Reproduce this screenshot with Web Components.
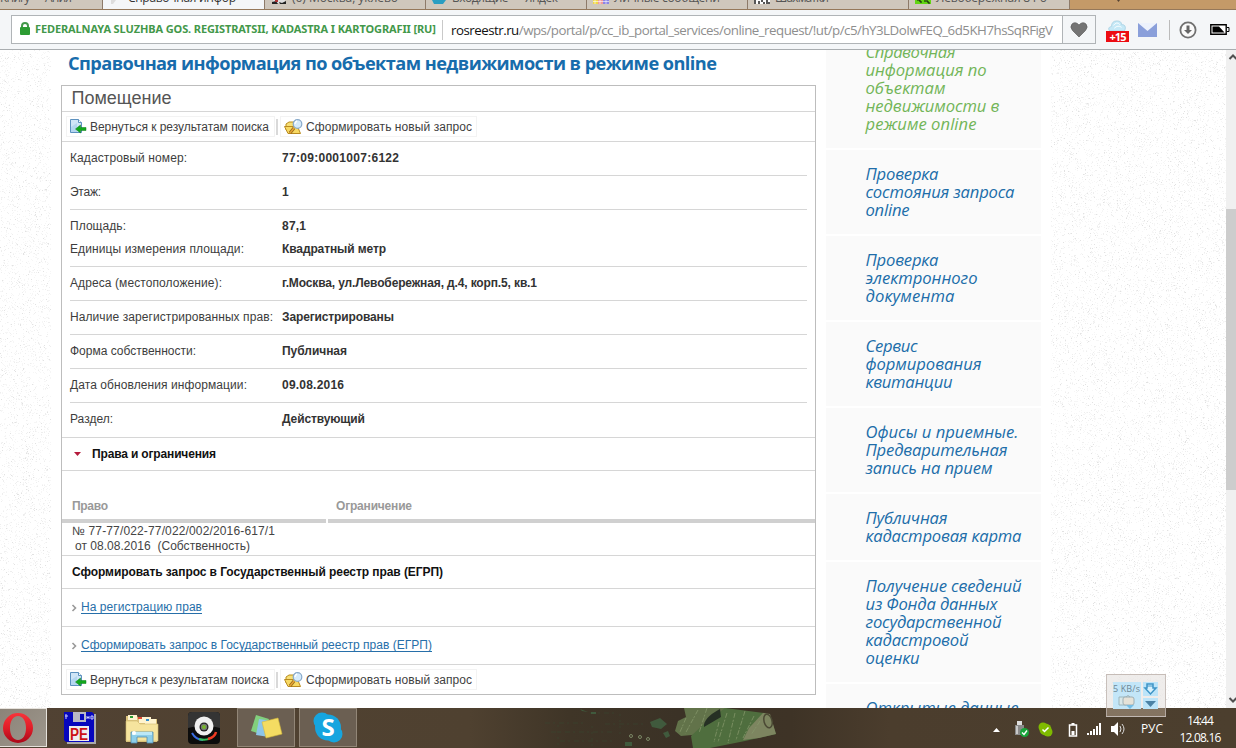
<!DOCTYPE html>
<html lang="ru"><head><meta charset="utf-8"><title>Росреестр</title>
<style>html,body{margin:0;width:1236px;height:748px;overflow:hidden;background:#fff}body{font:12px/16px "Liberation Sans",Arial,sans-serif}</style></head>
<body><app-screen></app-screen>
<script>
const F=(t,w,c='')=>`<fit-text w="${w}" class="${c}">${t}</fit-text>`;
function define(name,html,setup){
  customElements.define(name,class extends HTMLElement{
    connectedCallback(){
      if(this.shadowRoot)return;
      const t=document.createElement('template');
      t.innerHTML='<style>*{box-sizing:border-box}:host{display:block;box-sizing:border-box}</style>'+(typeof html==='function'?html(this):html);
      this.attachShadow({mode:'open'}).append(t.content.cloneNode(true));
      if(setup)setup(this);
    }
  });
}

define('app-screen',`<style>:host{display:flex;flex-direction:column;width:1236px;height:748px;position:relative;overflow:hidden}
site-page{flex:1;min-height:0}speed-gadget{position:absolute;left:1106px;top:674px}</style>
<tab-strip></tab-strip><address-bar></address-bar><site-page></site-page><task-bar></task-bar><speed-gadget></speed-gadget>`);

define('tab-strip',`<style>:host{display:flex;height:10px;background:#c49a68;overflow:hidden;border-bottom:1px solid #95785a;font:12px/14px "Open Sans","Noto Sans",sans-serif;color:#555}
:host{height:10px}
.t{flex:none;width:161px;height:10px;background:#cfc7bc;border-right:1px solid #8d7a69;display:flex;white-space:nowrap;overflow:hidden}
.t fit-text{margin-top:-9px}.t svg{flex:none;margin:0 5px 0 6px}
.first{width:103px}.on{background:#f4f6f8;color:#333;margin-bottom:-1px;width:162px}.plus{margin-left:46px;width:5px}</style>
<div class="t first">${F('Книгу — Ания',72)}</div>
<div class="t on"><svg width="14" height="4"><path d="M2 0h5l-3 4H2z" fill="#ddd"/></svg>${F('Справочная инфор',108)}</div>
<div class="t"><svg width="16" height="4"><path d="M2 0h12v3H2z" fill="#ddd"/><path d="M1 2l4-1 2 3H1zM8 2l3 1 4-2v3H9z" fill="#222"/><path d="M4 0h3v2H4z" fill="#a33"/></svg>${F('(6) Москва, уклево',106)}</div>
<div class="t"><svg width="15" height="4"><path d="M0 0h14l-3 4H2z" fill="#2a9ec2"/></svg>${F('Входящие — Яндек',106)}</div>
<div class="t"><svg width="16" height="4"><path d="M0 0h5v4H0z" fill="#f0d848"/><path d="M5 0h5v4H5z" fill="#f19b9b"/><path d="M10 0h6v4h-6z" fill="#8a84e6"/><path d="M0 1.5h16M2 0v4M7 0v4M13 0v4" stroke="#fff" stroke-width=".6"/></svg>${F('Личные сообщени',106)}</div>
<div class="t"><svg width="16" height="4"><path d="M0 0h16v4H0z" fill="#fff"/><path d="M1 0v4M5 1v3M8 0v2M10 2v2M13 0v4M15 2v2" stroke="#111" stroke-width="1.4"/></svg>${F('Шахматки',54)}</div>
<div class="t"><svg width="16" height="4"><path d="M0 0h16v4H0z" fill="#62d513"/><path d="M2 0h3v2h2M9 1h4v2h2" stroke="#111" fill="none"/></svg>${F('Левобережная 8 Ро',111)}</div>
<svg class="plus" width="5" height="3"><path d="M1 0h3L2.500 2z" fill="#543"/></svg>`);

define('address-bar',`<style>:host{display:flex;height:40px;background:#f4f6f8;border-bottom:1px solid #a9adb0;padding:5px 0 6px 11px;align-items:flex-start;font-family:"Open Sans","Noto Sans",sans-serif}
.box{width:1052px;height:29px;border:1px solid #b0b4b7;background:#fff;display:flex;align-items:center}
.lock{margin:0 4px 1px 7px;flex:none}.org{font:bold 11px/16px "Noto Sans","Open Sans",sans-serif;color:#43984a;width:408px;margin-top:-2px}.sep{width:1px;height:20px;background:#c9c9c9;margin-right:8px;flex:none;margin-left:-1px}
.url{font-size:13.3px;line-height:20px;color:#8e8e8e;white-space:nowrap;overflow:hidden}.url b{font-weight:400;color:#111}
.heart{width:34px;height:29px;border:1px solid #b0b4b7;margin-left:-1px;display:grid;place-items:center}
.tools{display:flex;align-items:center;height:29px}
.cloud{width:23px;height:27px;margin:8px 0 0 10px}.badge{font:bold 11px/11px "Open Sans";background:#ec0c12;color:#fff;height:11px;width:23px;text-align:center}
.cloud svg{display:block}</style>
<div class="box"><svg class="lock" width="12" height="14"><path d="M3 6V4q0-3 3-3t3 3v2" fill="none" stroke="#43984a" stroke-width="2"/><rect x="1" y="5" width="10" height="8" rx="1" fill="#2d9c33"/></svg>
<div class="org">${F('FEDERALNAYA SLUZHBA GOS. REGISTRATSII, KADASTRA I KARTOGRAFII [RU]',401)}</div><i class="sep"></i><div class="url">${F('<b>rosreestr.ru</b>/wps/portal/p/cc_ib_portal_services/online_request/!ut/p/c5/hY3LDoIwFEQ_6d5KH7hsSqRFigV',602)}</div></div>
<div class="heart"><svg width="18" height="16" viewBox="0 0 18 16"><path d="M9 15L2.500 8.500Q-.5 5 2 2q3.500-3 7 1 3.500-4 7-1 2.500 3-.5 6.500z" fill="#747474" stroke="#5f5f5f" stroke-width=".7"/></svg></div>
<div class="tools"><div class="cloud"><svg width="22" height="11" viewBox="0 0 22 12"><path d="M3 12Q0 8 5 7q0-6 6-6 5 0 5 4 5 0 4 5l-1 2z" fill="#c5e8f6" stroke="#9bc8dc" stroke-width=".7"/><path d="M7 6q4-5 7-1M8 9q4-4 8-1" stroke="#fff" fill="none"/></svg><div class="badge">${F('+15',17)}</div></div>
<svg style="margin-left:9px" width="19" height="14"><path d="M0 0h19v14H0z" fill="#8a9fda"/><path d="M0 0h19l-9.500 8z" fill="#edf2fc"/></svg>
<svg style="margin-left:12px" width="1" height="20"><path d="M.5 0v20" stroke="#bbb"/></svg>
<svg style="margin-left:9px" width="18" height="18"><circle cx="9" cy="9" r="7.600" fill="#fafafa" stroke="#707070" stroke-width="1.800"/><path d="M7.500 4.500h3V9H13l-4 4-4-4h2.500z" fill="#666"/></svg>
<svg style="margin-left:13px" width="20" height="12"><path d="M.8.800h15.400v9.400H.8z" fill="#fff" stroke="#000" stroke-width="1.400"/><path d="M2.500 2.500H9l5.500 6h-12z"/><path d="M17 3.500h2v4h-2" fill="none" stroke="#000"/></svg></div>`);

define('paper-noise','<svg style="display:block" width="100%" height="658"></svg>',h=>{
  const w=+h.getAttribute('w');let s=w*7919;const r=()=>(s=(s*1664525+1013904223)>>>0)/4294967296;
  const svg=h.shadowRoot.querySelector('svg');
  for(const [col,n] of [['#f6f6f6',.1],['#eeeeee',.04],['#e2e2e2',.01]]){
    let d='';for(let i=0;i<w*658*n;i++)d+=`M${r()*w|0} ${r()*658|0}h1v1h-1z`;
    const p=document.createElementNS('http://www.w3.org/2000/svg','path');p.setAttribute('d',d);p.setAttribute('fill',col);svg.append(p);
  }
});

define('site-page',`<style>:host{display:grid;grid-template-columns:51px 10px 755px 10px 215px 10px 175px 10px;overflow:hidden;height:658px;background:#fff}
h1{margin:0 0 0 7px;height:35px;font:bold 18.2px/27px "Open Sans","Noto Sans",sans-serif;color:#176cac;white-space:nowrap}.c{min-height:0}</style>
<paper-noise w="51"></paper-noise><i></i><div class="c"><h1>${F('Справочная информация по объектам недвижимости в режиме online',649)}</h1><object-card></object-card></div><i></i><side-menu></side-menu><i></i><paper-noise w="175"></paper-noise><scroll-bar></scroll-bar>`);

define('scroll-bar',`<style>:host{background:#f0f0f0;height:658px;display:flex;flex-direction:column}.th{height:281px;background:#cdcdcd;margin-top:149px}svg{display:block}.e{margin-top:auto}</style>
<svg width="10" height="10"><path d="M3.500 9L7 5.500 10.500 9" fill="none" stroke="#505050" stroke-width="2"/></svg><div class="th"></div><svg class="e" width="10" height="12"><path d="M3.500 2L7 5.500 10.500 2" fill="none" stroke="#505050" stroke-width="2"/></svg>`);

const menu=[[['Справочная',90],['информация по',121],['объектам',80],['недвижимости в',134],['режиме online',111]],
[['Проверка',73],['состояния запроса',149],['online',44]],[['Проверка',73],['электронного',112],['документа',89]],
[['Сервис',52],['формирования',116],['квитанции',87]],[['Офисы и приемные.',153],['Предварительная',142],['запись на прием',127]],
[['Публичная',82],['кадастровая карта',156]],[['Получение сведений',156],['из Фонда данных',132],['государственной',136],['кадастровой',103],['оценки',54]],[['Открытые данные',153]]];
define('side-menu',`<style>:host{display:flex;flex-direction:column;gap:2px;margin-top:-22px;height:720px}
a{display:block;flex:none;background:#fafafa;padding:15px 0 15px 39.5px;font:italic 16.6px/18px "Open Sans","Noto Sans",sans-serif;color:#206da9;white-space:nowrap}
a div{height:18px}a.on{color:#72b558}</style>${menu.map((m,i)=>`<a class="${i?'':'on'}">${m.map(l=>`<div>${F(...l)}</div>`).join('')}</a>`).join('')}`);

define('action-bar',`<style>:host{display:flex;height:29px;align-items:center;padding-left:4px;color:#3f3f3f}.b{height:21px;display:flex;align-items:center;border:1px solid #f3f3f3;flex:none}
.b svg{flex:none}.s{width:2px;height:16px;background:#d9d9d9;margin:0 2px 0 1px}</style>
<div class="b" style="width:209px;padding-left:3px"><svg width="17" height="17" style="margin-right:3px"><path d="M.5 1.500h8l3 3v10H.5z" fill="#cfe5f7" stroke="#5c91bf"/><path d="M8.500 1.500v3h3" fill="#fff" stroke="#5c91bf"/><path d="M1 9l6-4v9H1z" fill="#b4d6f0"/><path d="M5.500 11l5-4v2.500h5.500v3h-5.500V15z" fill="#12a81d" stroke="#0b7d18" stroke-width=".5"/></svg>${F('Вернуться к результатам поиска',179)}</div><i class="s"></i>
<div class="b" style="width:197px;padding-left:3px"><svg width="20" height="16" style="margin-right:2px"><path d="M2 5l3-2h5l2 2v6H2z" fill="#f7df75" stroke="#ba8d1d"/><path d="M.5 7.500h13l3 7H4z" fill="#f7d963" stroke="#b98a20"/><path d="M10 9l-4 5" stroke="#94641b" stroke-width="3"/><path d="M10 9l-4 5" stroke="#e6a533" stroke-width="1.500"/><circle cx="13.500" cy="5" r="4.300" fill="#d6ebfb" stroke="#87a9ca" stroke-width="1.200"/><path d="M11 5q0-2 2-3" stroke="#fff" fill="none" stroke-width="1.400"/></svg>${F('Сформировать новый запрос',166)}</div>`);

define('data-row',h=>`<style>:host{display:flex;margin:0 8px;height:${h.getAttribute('h')||34}px;align-items:flex-start;padding-top:${h.getAttribute('pt')||8}px;color:#3d3d3d;${h.hasAttribute('noline')?'':'border-bottom:1px solid #d6d6d6'}}
.l{width:212px;flex:none}.v{font-weight:bold;color:#333}</style><div class="l">${F(h.getAttribute('label'),h.getAttribute('lw'))}</div><div class="v">${F(h.getAttribute('value'),h.getAttribute('vw'))}</div>`);

define('object-card',`<style>:host{width:755px;height:610px;border:1px solid #bdbdbd;display:flex;flex-direction:column;background:#fff}:host>*,div{flex:none}
.h{height:26px;border-bottom:1px solid #d6d6d6;font-size:18px;line-height:25px;padding-left:9.5px;color:#555}
.tb{height:30px;border-bottom:1px solid #d6d6d6}.rights{height:34px;border-top:1px solid #d6d6d6;border-bottom:1px solid #d6d6d6;display:flex;align-items:center;font-weight:bold;color:#111;padding-left:12px}
.rights svg{margin-right:11px}.th{height:52px;display:grid;grid-template-columns:264px 1fr;column-gap:2px;font-weight:bold;color:#999}.th div{border-bottom:4px solid #d0d0d0;padding:27px 0 0 10px}.th div+div{padding-left:8px}
.td{height:33px;border-bottom:1px solid #d6d6d6;padding:1px 0 0 10px;line-height:15px;color:#444;white-space:pre}.td div{height:15px}
.td div+div{padding-left:3px}.q{height:33px;border-bottom:1px solid #d6d6d6;padding:8px 10px;font-weight:bold;color:#111}
.a{height:38px;border-bottom:1px solid #d6d6d6;display:flex;align-items:center;padding-left:9px;color:#276fa9}.a fit-text{border-bottom:1px solid #276fa9;line-height:13px;height:13px;margin-bottom:1px}.a svg{margin-right:4px}</style>
<div class="h">${F('Помещение',100)}</div><div class="tb"><action-bar></action-bar></div>
<data-row label="Кадастровый номер:" lw="117" value="77:09:0001007:6122" vw="117"></data-row>
<data-row label="Этаж:" lw="31" value="1" vw="6"></data-row>
<data-row label="Площадь:" lw="56" value="87,1" vw="24" noline></data-row>
<data-row label="Единицы измерения площади:" lw="174" value="Квадратный метр" vw="104" h="23" pt="-3"></data-row>
<data-row label="Адреса (местоположение):" lw="152" value="г.Москва, ул.Левобережная, д.4, корп.5, кв.1" vw="255"></data-row>
<data-row label="Наличие зарегистрированных прав:" lw="203" value="Зарегистрированы" vw="112"></data-row>
<data-row label="Форма собственности:" lw="126" value="Публичная" vw="65"></data-row>
<data-row label="Дата обновления информации:" lw="177" value="09.08.2016" vw="62"></data-row>
<data-row label="Раздел:" lw="43" value="Действующий" vw="83" noline></data-row>
<div class="rights"><svg width="7" height="4"><path d="M0 0h7L3.500 4z" fill="#b51b3c"/></svg>${F('Права и ограничения',124)}</div>
<div class="th"><div>${F('Право',36)}</div><div>${F('Ограничение',76)}</div></div>
<div class="td"><div>${F('№ 77-77/022-77/022/002/2016-617/1',203)}</div><div>${F('от 08.08.2016  (Собственность)',175)}</div></div>
<div class="q">${F('Сформировать запрос в Государственный реестр прав (ЕГРП)',371)}</div>
<div class="a"><svg width="6" height="8"><path d="M1.500 1l3 3-3 3" fill="none" stroke="#999" stroke-width="1.600"/></svg>${F('На регистрацию прав',121)}</div>
<div class="a"><svg width="6" height="8"><path d="M1.500 1l3 3-3 3" fill="none" stroke="#999" stroke-width="1.600"/></svg>${F('Сформировать запрос в Государственный реестр прав (ЕГРП)',351)}</div>
<action-bar></action-bar>`);

define('task-bar',`<style>:host{display:flex;height:40px;flex:none;background:linear-gradient(90deg,#514233 0,#4f4130 38%,#3f3527 46%,#3b3226 55%,#3e3326 64%,#4b3d2d 72%,#4c3f2e);overflow:hidden;color:#fff;font-family:"Open Sans","Noto Sans",sans-serif}
.b{flex:none;height:40px;display:grid;place-items:center}.w{background:#6b5f52;border:1px solid #928677;height:39px}.cur{background:linear-gradient(135deg,#8b8378,#9e978d);border:1px solid #e6e2dc;border-left:0;height:39px}
.art{margin-left:173px;flex:none}.tray{display:flex;align-items:center;flex:1;padding:2px 0 0 192px}.tray svg{flex:none}.clock{font-size:12px;line-height:17px;text-align:center;width:44px;margin-left:15px;margin-top:-1px}.lang{font-size:12px;margin-left:14px;width:22px}</style>
<div class="b cur" style="width:47px;padding-right:11px"><svg width="32" height="32"><defs><linearGradient id="o" x2="0" y2="1"><stop stop-color="#f8343a"/><stop offset=".5" stop-color="#e01d28"/><stop offset="1" stop-color="#a90819"/></linearGradient></defs><path fill-rule="evenodd" fill="url(#o)" d="M16 1a15 15 0 1 0 0 30 15 15 0 1 0 0-30m0 3c5 0 8 5 8 12s-3 12-8 12-8-5-8-12 3-12 8-12"/></svg></div>
<div class="b" style="width:66px"><svg width="32" height="32"><path d="M2 2h30v30H3z" fill="#aaa"/><path d="M0 0h28l2 2v28H2l-2-2z" fill="#0707bd"/><path d="M9 0h13v10H9z" fill="#b9b9c5"/><path d="M16 2h4v6h-4z" fill="#0707bd"/><path d="M5 14h20v15H5z" fill="#eee"/><path d="M2 2v5M1 4h3M23 4v3M25 4v3M23 5.500h2M27 4v3h2V4z" stroke="#ccf" fill="none"/><text x="6" y="28" font-family="Liberation Sans" font-weight="bold" font-size="16" textLength="18" lengthAdjust="spacingAndGlyphs" fill="#cc1116">PE</text></svg></div>
<div class="b" style="width:58px"><svg width="34" height="32"><path d="M1 4h11l2 3h18v23H1z" fill="#dcc37c"/><path d="M3 3h9v5H3zM14 5h12v6H14zM20 7h11v6H20z" fill="#fff4cf"/><path d="M5 4h3v2H5z" fill="#2a9d35"/><path d="M13 5h4v2h-4z" fill="#dc4935"/><path d="M21 7h3v2h-3z" fill="#348dce"/><path d="M1 9h11l3 3h18v17H1z" fill="#f6e49e" stroke="#d2ba70" stroke-width=".6"/><path d="M6 31V20h22v11h-6v-6H12v6z" fill="#8dcee9" stroke="#508eb0" stroke-width=".8"/><path d="M7 20h20v3H7z" fill="#bce8f7"/><circle cx="9" cy="21" r="2" fill="#fff"/></svg></div>
<div class="b" style="width:66px"><svg width="32" height="32"><rect width="32" height="32" rx="4" fill="#0c0c0c"/><path d="M0 4q0-4 4-4h24q4 0 4 4v12Q16 11 0 16z" fill="#343434"/><path d="M4 21q4 7 11 7" stroke="#3a6de0" stroke-width="2" fill="none"/><path d="M11 27q7 2 11-1" stroke="#38c05c" stroke-width="2" fill="none"/><path d="M20 27q7-2 8-7" stroke="#f03b22" stroke-width="2.500" fill="none"/><circle cx="16" cy="14" r="9.500" fill="#f0f0f0"/><circle cx="16" cy="15" r="4.500" fill="#222"/><circle cx="16" cy="15" r="3.200" fill="#777"/><circle cx="16" cy="15" r="2" fill="#75b52b"/></svg></div>
<div class="b w" style="width:58px"><svg width="34" height="28"><path d="M7 1l13 4-5 16-13-4z" fill="#82cf7d"/><path d="M10 5l13 2-3 16-13-2z" fill="#8cc5e9"/><path d="M13 8l16-4 4 16-16 4z" fill="#f4dc62" stroke="#d3b93b" stroke-width=".6"/></svg></div>
<div class="b w" style="width:58px;margin-left:4px"><svg width="30" height="31"><g fill="#16a5df"><circle cx="9" cy="9" r="8.500"/><circle cx="21" cy="22" r="8.500"/><circle cx="15" cy="15.500" r="13"/></g><text x="15" y="24" text-anchor="middle" font-family="Open Sans" font-size="24" font-weight="bold" fill="#fff">S</text></svg></div>
<svg class="art" width="270" height="40" viewBox="530 0 270 40"><g fill="none" stroke="#394b32" opacity=".5"><path d="M545 15h42M551 24h63M560 33h52M605 16h40M590 5h24" stroke-dasharray="5 3 2 4"/><path d="M558 17v20M592 18v22M620 6v24" stroke-dasharray="2 4"/></g><g fill="#405a3d"><path d="M580 1l8 3-6-1M591 4h5v2h-5M650 14l10-4 7 6-6 5-9-2M663 25l5-2 2 5-4 2M625 34h7v4h-7z"/></g><g fill="none" stroke="#7b8866"><circle cx="631" cy="28" r="1.500"/><circle cx="640" cy="29" r="1.500"/><circle cx="648" cy="31" r="1.500"/></g>
<path d="M684 0h43l-16 14-8 12-22 2-6-5 3-10 8-4z" fill="#62734a"/><path d="M725 0l40 5 7 9 4 12-31 7-35 7h-17l-2-12 13-12z" fill="#4f6e3e"/><path d="M749 20l14-15 7 1 6 20-17 4-16 2z" fill="#7d8560"/><path d="M720 1q-17 9-16 18l17-10z" fill="#263024"/><path d="M686 10l-6 14M698 2l-13 24M707 0l-8 25M719 14l-5 20M727 5l-9 29M735 5l-7 30M745 3l-9 29M754 8l-11 22M760 13l-9 14" stroke="#87996c" stroke-dasharray="5 2 2 1" opacity=".75"/><ellipse cx="768" cy="13" rx="4" ry="7" transform="rotate(-15 768 13)" fill="none" stroke="#4b4934" stroke-width="1.500"/></svg>
<div class="tray"><svg width="9" height="5"><path d="M1 5l3.500-4L8 5z" fill="#fff"/></svg>
<svg style="margin-left:12px" width="17" height="18"><path d="M4 1h5v4H4z" fill="#ddd"/><path d="M2 5h9v10H2z" fill="#8a8a8a"/><path d="M3 6h2v8H3z" fill="#c9c9c9"/><circle cx="11.500" cy="12.500" r="4.500" fill="#18a43a"/><path d="M9 12.500l2 2 3-4" fill="none" stroke="#fff" stroke-width="1.400"/></svg>
<svg style="margin-left:8px" width="15" height="15"><g fill="#7fba00"><circle cx="5" cy="5" r="4.500"/><circle cx="10" cy="10" r="4.500"/><circle cx="7.500" cy="7.500" r="6"/></g><path d="M4.500 7.500l2 2 4-4" fill="none" stroke="#fff" stroke-width="1.500"/></svg>
<svg style="margin-left:15px" width="10" height="15"><path d="M1.500 3h7v11h-7z" fill="none" stroke="#fff" stroke-width="1.500"/><path d="M3.500 1h3v2h-3zM3.500 9h3v4h-3z" fill="#fff"/></svg>
<svg style="margin-left:9px" width="15" height="14"><path d="M0 11h2v2H0zM3 9h2v4H3zM6 7h2v6H6zM9 4h2v9H9zM12 1h2v12h-2z" fill="#fff"/></svg>
<svg style="margin-left:9px" width="16" height="14"><path d="M0 4h3l4-4v14l-4-4H0z" fill="#fff"/><path d="M9 4q2 3 0 6M11 2q4 5 0 10" fill="none" stroke="#ddd"/></svg>
<div class="lang">${F('РУС',22)}</div><div class="clock">${F('14:44',27)}<br>${F('12.08.16',42)}</div></div>`);

define('speed-gadget',`<style>:host{width:60px;height:43px;border:1px solid rgba(190,180,175,.8);background:linear-gradient(rgba(235,232,230,.8) 0 33px,rgba(200,180,160,.45) 33px);font:9px/13px "Open Sans";color:#6e8794;padding:7px 6px;display:grid;grid-template-columns:28px 15px;gap:2px}
.l{background:#c3e6f8;height:27px}.r{display:grid;gap:2px;height:27px}.r svg{background:#bce4f9}svg{display:block}</style>
<div class="l">${F('5 KB/s',27)}<svg width="28" height="14"><path d="M6 2h7v8H6z" fill="#d9e8e9" stroke="#9ab6be"/><rect x="10" y="2" width="11" height="8" rx="2" fill="#e5e2d8" stroke="#9eafb4"/><path d="M13 2q2-3 4 0" fill="none" stroke="#9eafb4"/><path d="M13 10h8l-4 4z" fill="#76bde4"/></svg></div><div class="r"><svg width="15" height="14"><path d="M4 2h6v4h3l-5.500 6L2 6h2z" fill="#d8f1fc" stroke="#3e94c6" stroke-width="1.500"/><path d="M4 4h6" stroke="#3e94c6"/></svg><svg width="15" height="11"><path d="M2 3h11L7.500 9z" fill="#4b82a5"/></svg></div>`);

/* Spreads its letters so that the run takes exactly the given width. */
define('fit-text',h=>`<style>:host{display:inline-block;white-space:pre;flex:none;width:${h.getAttribute('w')}px;vertical-align:top}span{display:inline-block}</style><span><slot></slot></span>`,h=>{
  const s=h.shadowRoot.querySelector('span'),n=h.textContent.length,g=s.getBoundingClientRect().width;
  if(g&&n>1)h.style.letterSpacing=((+h.getAttribute('w')-g)/(n-1)).toFixed(3)+'px';
});
/* The second line of the area group sits close under the first. */
for(const r of document.querySelector('app-screen').shadowRoot.querySelector('site-page').shadowRoot.querySelector('object-card').shadowRoot.querySelectorAll('data-row[pt="-3"]'))r.style.paddingTop='0';
for(const r of document.querySelector('app-screen').shadowRoot.querySelector('site-page').shadowRoot.querySelector('object-card').shadowRoot.querySelectorAll('data-row[pt="-3"]')){r.style.height='26px';r.style.marginTop='-3px'}
</script></body></html>
